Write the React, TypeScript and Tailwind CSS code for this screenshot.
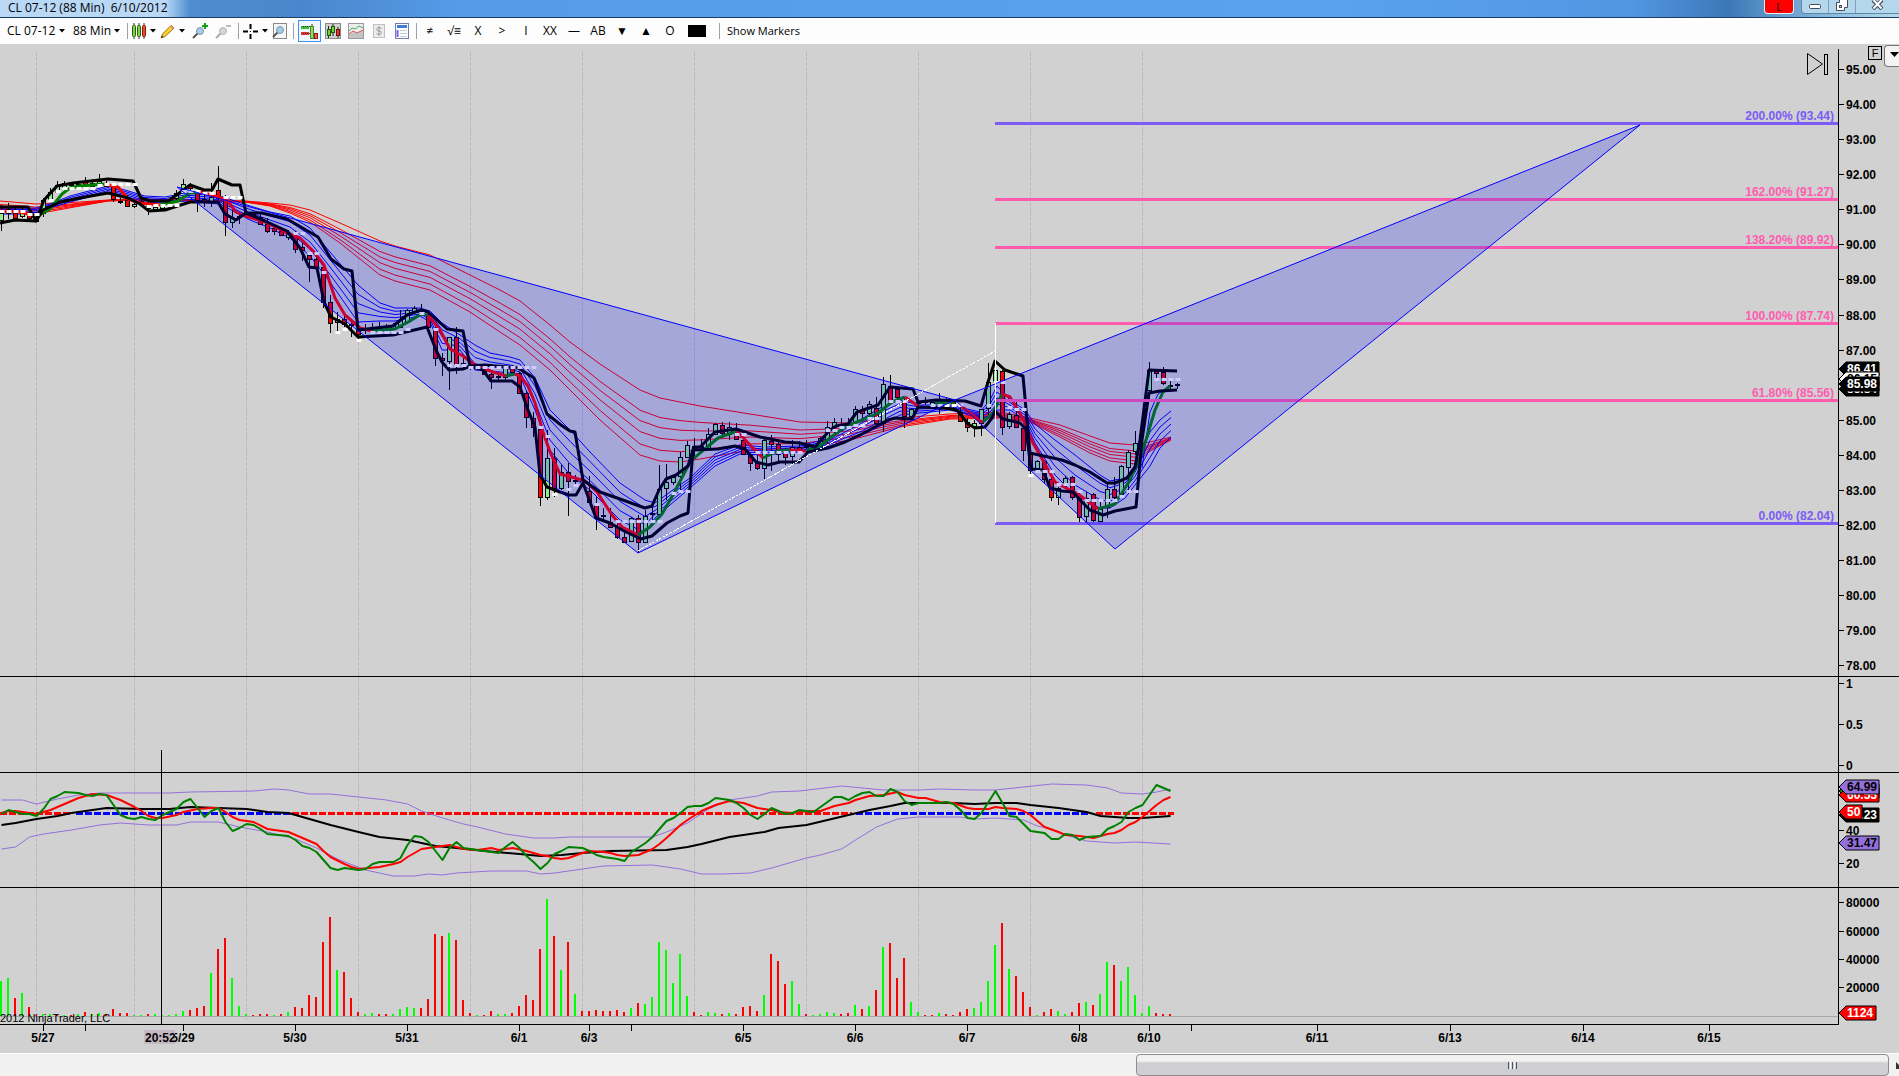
import type { ReactNode } from 'react';

type Point = [number, number];
type Candle = [number, number, number, number, number, 'g' | 'r' | 'd'];

const barX = (i: number) => 1.5 + 7 * i;
const toPoints = (pts: Point[]) => pts.map((p) => p.join(',')).join(' ');
const byBar = (pts: Point[]) => pts.map(([i, y]) => `${barX(i)},${y}`).join(' ');

const gridX = [36, 134, 246, 358, 470, 582, 694, 806, 918, 1030, 1142];

// bar index, high, low, body top, body bottom, kind
const candles: Candle[] = [
  [0, 205, 231, 213, 220, 'g'], [1, 203, 219, 209, 213, 'r'], [2, 208, 218, 213, 218, 'r'], [3, 207, 218, 212, 216, 'g'],
  [4, 207, 220, 215, 218, 'r'], [5, 212, 222, 215, 221, 'r'], [6, 198, 217, 200, 213, 'g'], [7, 188, 200, 192, 199, 'g'],
  [8, 181, 193, 185, 192, 'g'], [9, 181, 190, 183, 187, 'g'], [10, 182, 188, 184, 187, 'd'], [11, 181, 188, 184, 187, 'g'],
  [12, 177, 187, 182, 185, 'r'], [13, 181, 187, 183, 186, 'g'], [14, 174, 185, 181, 184, 'g'], [15, 181, 187, 183, 186, 'g'],
  [16, 183, 202, 186, 199, 'r'], [17, 198, 204, 201, 202, 'd'], [18, 195, 207, 200, 206, 'r'], [19, 201, 208, 204, 206, 'g'],
  [20, 198, 205, 201, 202, 'd'], [21, 201, 215, 204, 208, 'r'], [22, 204, 212, 207, 209, 'g'], [23, 203, 210, 205, 208, 'g'],
  [24, 200, 206, 202, 204, 'g'], [25, 190, 200, 193, 198, 'g'], [26, 179, 192, 184, 189, 'g'], [27, 183, 190, 185, 188, 'r'],
  [28, 190, 212, 193, 200, 'r'], [29, 195, 207, 199, 202, 'r'], [30, 183, 207, 197, 202, 'g'], [31, 166, 200, 190, 198, 'r'],
  [32, 195, 236, 200, 222, 'r'], [33, 208, 228, 218, 222, 'g'], [34, 213, 224, 216, 218, 'd'], [35, 210, 217, 213, 215, 'r'],
  [36, 212, 219, 214, 216, 'd'], [37, 213, 225, 217, 224, 'r'], [38, 218, 233, 224, 231, 'r'], [39, 226, 235, 228, 231, 'r'],
  [40, 228, 236, 231, 235, 'r'], [41, 230, 240, 234, 237, 'g'], [42, 231, 253, 236, 249, 'r'], [43, 243, 261, 247, 250, 'r'],
  [44, 252, 282, 255, 259, 'r'], [45, 255, 268, 259, 267, 'r'], [46, 263, 308, 267, 302, 'r'], [47, 295, 333, 302, 323, 'r'],
  [48, 312, 332, 319, 322, 'g'], [49, 315, 327, 319, 324, 'r'], [50, 320, 337, 324, 327, 'd'], [51, 325, 340, 329, 334, 'r'],
  [52, 324, 334, 328, 331, 'd'], [53, 323, 332, 327, 329, 'g'], [54, 322, 332, 327, 329, 'g'], [55, 324, 330, 326, 328, 'd'],
  [56, 323, 330, 325, 328, 'g'], [57, 310, 327, 320, 327, 'g'], [58, 309, 324, 310, 322, 'g'], [59, 306, 313, 308, 312, 'g'],
  [60, 304, 313, 309, 311, 'r'], [61, 310, 329, 316, 327, 'r'], [62, 327, 366, 330, 358, 'r'], [63, 353, 376, 358, 360, 'r'],
  [64, 337, 390, 337, 361, 'g'], [65, 327, 374, 337, 364, 'r'], [66, 357, 368, 363, 366, 'd'], [67, 362, 370, 365, 367, 'r'],
  [68, 364, 369, 366, 367, 'd'], [69, 365, 374, 369, 374, 'r'], [70, 373, 389, 374, 377, 'r'], [71, 372, 380, 376, 377, 'd'],
  [72, 368, 380, 368, 377, 'g'], [73, 365, 375, 368, 372, 'r'], [74, 372, 394, 373, 393, 'r'], [75, 391, 428, 393, 417, 'r'],
  [76, 412, 437, 418, 427, 'r'], [77, 423, 506, 429, 497, 'r'], [78, 430, 500, 458, 497, 'g'], [79, 448, 497, 458, 488, 'r'],
  [80, 465, 490, 472, 488, 'g'], [81, 463, 516, 472, 481, 'r'], [82, 475, 487, 480, 481, 'd'], [83, 475, 485, 479, 481, 'r'],
  [84, 476, 504, 491, 502, 'r'], [85, 497, 530, 505, 517, 'r'], [86, 508, 520, 515, 517, 'd'], [87, 508, 527, 522, 527, 'r'],
  [88, 519, 539, 527, 537, 'r'], [89, 532, 542, 537, 542, 'r'], [90, 517, 542, 518, 541, 'g'], [91, 515, 553, 518, 542, 'r'],
  [92, 510, 543, 516, 542, 'g'], [93, 502, 520, 513, 514, 'd'], [94, 465, 515, 489, 514, 'g'], [95, 464, 500, 482, 488, 'g'],
  [96, 475, 485, 477, 482, 'g'], [97, 452, 492, 457, 476, 'g'], [98, 441, 458, 445, 457, 'g'], [99, 438, 458, 446, 449, 'r'],
  [100, 439, 450, 446, 448, 'd'], [101, 428, 450, 434, 448, 'g'], [102, 423, 435, 424, 434, 'g'], [103, 422, 435, 425, 433, 'r'],
  [104, 422, 440, 427, 434, 'g'], [105, 423, 440, 432, 439, 'r'], [106, 439, 455, 440, 454, 'r'], [107, 453, 471, 455, 463, 'r'],
  [108, 455, 470, 463, 468, 'r'], [109, 438, 479, 440, 468, 'g'], [110, 435, 471, 441, 444, 'r'], [111, 440, 463, 444, 454, 'r'],
  [112, 448, 465, 452, 457, 'r'], [113, 440, 465, 447, 456, 'g'], [114, 441, 453, 447, 449, 'r'], [115, 440, 450, 446, 448, 'd'],
  [116, 444, 450, 446, 448, 'd'], [117, 437, 446, 438, 446, 'g'], [118, 421, 445, 427, 440, 'g'], [119, 418, 433, 422, 427, 'g'],
  [120, 418, 428, 424, 425, 'd'], [121, 418, 428, 424, 426, 'r'], [122, 406, 423, 409, 422, 'g'], [123, 406, 420, 410, 413, 'r'],
  [124, 401, 418, 404, 413, 'g'], [125, 397, 426, 408, 423, 'r'], [126, 377, 432, 384, 423, 'g'], [127, 375, 403, 386, 402, 'r'],
  [128, 387, 400, 389, 397, 'r'], [129, 397, 428, 400, 416, 'r'], [130, 408, 420, 409, 416, 'g'], [131, 400, 407, 402, 404, 'd'],
  [132, 397, 405, 401, 402, 'd'], [133, 399, 406, 402, 404, 'g'], [134, 393, 414, 400, 405, 'g'], [135, 397, 407, 401, 404, 'g'],
  [136, 400, 408, 402, 406, 'r'], [137, 407, 422, 412, 421, 'r'], [138, 418, 432, 422, 427, 'r'], [139, 420, 437, 423, 426, 'g'],
  [140, 409, 436, 409, 423, 'g'], [141, 363, 415, 382, 408, 'g'], [142, 362, 383, 370, 382, 'g'], [143, 370, 435, 371, 427, 'r'],
  [144, 412, 429, 414, 426, 'g'], [145, 402, 427, 415, 427, 'r'], [146, 427, 461, 428, 450, 'r'], [147, 451, 477, 454, 470, 'r'],
  [148, 460, 472, 461, 468, 'g'], [149, 460, 483, 461, 479, 'r'], [150, 478, 501, 479, 497, 'r'], [151, 487, 505, 488, 497, 'g'],
  [152, 476, 487, 478, 483, 'g'], [153, 476, 500, 477, 497, 'r'], [154, 490, 522, 497, 517, 'r'], [155, 492, 525, 498, 516, 'g'],
  [156, 493, 522, 494, 520, 'r'], [157, 502, 522, 509, 521, 'g'], [158, 483, 518, 489, 507, 'g'], [159, 477, 500, 489, 497, 'r'],
  [160, 465, 497, 466, 494, 'g'], [161, 450, 490, 452, 467, 'g'], [162, 431, 455, 443, 451, 'g'], [163, 440, 452, 446, 448, 'd'],
  [164, 362, 400, 370, 390, 'g'], [165, 369, 378, 371, 373, 'r'], [166, 367, 385, 372, 383, 'r'], [167, 381, 390, 385, 386, 'd'],
  [168, 383, 389, 384, 385, 'd'],
];

// x, first average, last average; the ones between are spread over the gap
const slowFan: [number, number, number][] = [
  [0, 201, 212], [36, 204, 214], [80, 202, 206], [108, 200, 201], [140, 199, 200], [200, 200, 201], [245, 201, 202], [270, 203, 206],
  [290, 205, 213], [310, 210, 222], [340, 223, 243], [380, 241, 275], [395, 246, 281], [430, 255, 290], [450, 265, 301],
  [470, 275, 312], [500, 290, 332], [520, 301, 345], [550, 325, 370], [570, 342, 390], [600, 364, 420], [640, 390, 455],
  [660, 398, 461], [680, 402, 462], [700, 406, 459], [750, 414, 450], [800, 422, 448], [850, 423, 440], [900, 418, 427],
  [950, 414, 419], [1000, 412, 418], [1030, 418, 422], [1060, 425, 437], [1090, 436, 453], [1110, 443, 461], [1135, 445, 464],
  [1150, 442, 451], [1171, 437, 440],
];
const fastFan: [number, number, number][] = [
  [0, 208, 214], [36, 208, 214], [50, 204, 208], [70, 196, 202], [108, 186, 192], [125, 190, 196], [145, 196, 202], [165, 197, 203],
  [185, 193, 201], [220, 196, 204], [250, 206, 220], [270, 212, 228], [290, 216, 238], [310, 228, 256], [330, 252, 282],
  [358, 285, 322], [380, 303, 321], [395, 308, 321], [420, 308, 316], [430, 311, 322], [442, 323, 350], [460, 335, 350],
  [475, 345, 370], [490, 353, 371], [510, 357, 373], [520, 360, 376], [535, 378, 410], [550, 410, 450], [570, 430, 475],
  [590, 452, 490], [620, 483, 520], [645, 500, 533], [655, 503, 518], [670, 492, 505], [690, 478, 488], [715, 454, 466],
  [740, 445, 454], [765, 447, 455], [800, 446, 452], [830, 438, 446], [860, 420, 436], [880, 408, 426], [900, 400, 415],
  [920, 405, 413], [950, 405, 410], [980, 412, 418], [990, 400, 416], [997, 386, 410], [1010, 400, 410], [1025, 410, 420],
  [1035, 424, 443], [1055, 440, 475], [1075, 455, 495], [1100, 475, 508], [1110, 481, 508], [1125, 478, 498], [1135, 468, 485],
  [1150, 432, 466], [1160, 420, 448], [1171, 411, 437],
];
const slowShares = [0, 0.31, 0.47, 0.64, 0.83, 1];
const fastShares = [0, 0.25, 0.5, 0.75, 1];

const channelTop: Point[] = [
  [0, 207], [28, 207], [36, 221], [44, 200], [57, 186], [73, 183], [108, 179], [133, 181], [141, 198], [150, 201], [168, 201], [178, 194],
  [190, 185], [204, 190], [212, 190], [218, 179], [232, 185], [240, 185], [246, 213], [262, 213], [287, 219], [306, 230], [318, 237],
  [331, 259], [344, 269], [352, 271], [358, 330], [393, 326], [407, 315], [421, 310], [428, 312], [447, 329], [463, 331], [470, 366],
  [485, 365], [518, 368], [534, 378], [547, 414], [561, 425], [570, 431], [575, 432], [583, 480], [600, 492], [620, 499], [645, 508],
  [652, 506], [659, 490], [666, 479], [676, 475], [688, 466], [694, 447], [700, 447], [715, 432], [736, 429], [760, 437], [785, 442],
  [800, 443], [815, 447], [829, 431], [836, 426], [848, 424], [857, 412], [878, 405], [890, 387], [913, 389], [918, 402], [937, 400],
  [965, 401], [981, 406], [988, 382], [995, 361], [1005, 370], [1023, 376], [1030, 453], [1062, 460], [1075, 465], [1090, 472],
  [1107, 483], [1115, 483], [1127, 478], [1135, 467], [1140, 440], [1149, 370], [1177, 371],
];
const channelBottom: Point[] = [
  [0, 223], [15, 220], [36, 221], [43, 210], [60, 202], [85, 197], [108, 193], [128, 198], [140, 204], [149, 211], [165, 210], [190, 202],
  [218, 202], [225, 214], [236, 220], [246, 213], [265, 221], [287, 231], [300, 248], [309, 267], [317, 268], [324, 302], [331, 317],
  [345, 324], [358, 337], [393, 335], [427, 327], [436, 350], [442, 362], [449, 370], [463, 369], [470, 366], [483, 370], [491, 381],
  [512, 381], [520, 387], [528, 410], [535, 427], [540, 475], [547, 487], [560, 492], [569, 495], [576, 495], [583, 483], [596, 518],
  [610, 523], [624, 531], [641, 539], [652, 536], [667, 523], [680, 516], [688, 513], [693, 450], [718, 449], [735, 446], [745, 449],
  [756, 462], [768, 465], [780, 462], [799, 462], [808, 452], [828, 448], [845, 442], [860, 435], [888, 420], [895, 418], [912, 419],
  [918, 407], [945, 408], [957, 410], [968, 424], [975, 428], [985, 427], [992, 418], [995, 411], [1003, 419], [1020, 423], [1026, 429],
  [1031, 469], [1043, 470], [1050, 488], [1062, 491], [1073, 492], [1080, 500], [1090, 510], [1103, 515], [1115, 511], [1136, 507],
  [1142, 440], [1149, 393], [1160, 391], [1177, 390],
];

const trend: { up: boolean; pts: Point[] }[] = [
  { up: false, pts: [[0, 211], [20, 212], [36, 216]] },
  { up: true, pts: [[36, 217], [50, 209], [62, 194], [70, 188], [80, 186], [104, 184]] },
  { up: false, pts: [[104, 184], [118, 187], [128, 199], [140, 203], [160, 205]] },
  { up: true, pts: [[160, 205], [178, 201], [190, 193], [200, 192]] },
  { up: false, pts: [[200, 192], [218, 197], [227, 200], [236, 212], [245, 216], [265, 222], [285, 232], [300, 238], [314, 252], [324, 265], [335, 298], [345, 315], [360, 328], [372, 331]] },
  { up: true, pts: [[372, 331], [395, 329], [410, 321], [421, 314], [428, 315]] },
  { up: false, pts: [[428, 315], [440, 330], [450, 349], [463, 356], [475, 365], [493, 372], [506, 376]] },
  { up: true, pts: [[506, 376], [515, 374]] },
  { up: false, pts: [[515, 374], [520, 376], [528, 386], [535, 403], [543, 432], [550, 452], [560, 474], [575, 478], [585, 481], [597, 492], [612, 515], [622, 527], [638, 535]] },
  { up: true, pts: [[638, 535], [650, 527], [662, 514], [673, 495], [690, 462], [700, 453], [718, 438], [737, 431]] },
  { up: false, pts: [[737, 431], [750, 445], [763, 458]] },
  { up: true, pts: [[763, 458], [778, 451], [790, 450]] },
  { up: false, pts: [[790, 450], [806, 451]] },
  { up: true, pts: [[806, 451], [820, 446], [830, 438], [845, 427], [862, 420], [878, 413], [892, 402], [905, 397]] },
  { up: false, pts: [[905, 397], [918, 406]] },
  { up: true, pts: [[935, 403], [955, 402]] },
  { up: false, pts: [[960, 405], [980, 421], [983, 422]] },
  { up: true, pts: [[983, 422], [993, 413], [1002, 394]] },
  { up: false, pts: [[1002, 394], [1010, 397], [1022, 417], [1033, 443], [1045, 464], [1055, 482], [1062, 486], [1078, 494], [1090, 503], [1098, 509]] },
  { up: true, pts: [[1098, 509], [1115, 504], [1130, 480], [1142, 453], [1155, 410], [1163, 392], [1170, 386]] },
];

// first bar, last bar, y
const whiteDashes: [number, number, number][] = [
  [0, 3, 211], [4, 5, 214], [7, 7, 200], [8, 8, 191], [9, 13, 188], [14, 14, 185], [15, 19, 184], [21, 21, 206], [22, 25, 205],
  [26, 28, 191], [29, 30, 193], [32, 34, 197], [42, 43, 233], [44, 45, 253], [46, 46, 272], [48, 48, 332], [49, 49, 329], [51, 51, 340],
  [53, 57, 332], [58, 58, 329], [60, 60, 313], [62, 62, 329], [64, 66, 365], [67, 73, 367], [74, 76, 367], [77, 77, 427], [78, 78, 436],
  [79, 79, 494], [81, 81, 489], [82, 82, 485], [85, 85, 504], [88, 94, 521], [96, 96, 493], [97, 98, 491], [105, 106, 434],
  [108, 114, 452], [118, 119, 430], [120, 121, 427], [122, 123, 425], [124, 125, 418], [127, 129, 401], [133, 137, 405],
  [141, 141, 405], [142, 143, 382], [144, 144, 407], [145, 146, 409], [147, 147, 475], [148, 150, 471], [151, 153, 484],
  [154, 154, 491], [155, 159, 500], [160, 160, 496], [161, 162, 491], [165, 168, 379],
];

const fibs = [
  { y: 123, label: '200.00% (93.44)', color: '#7b5cf5' },
  { y: 199, label: '162.00% (91.27)', color: '#ff5cb0' },
  { y: 247, label: '138.20% (89.92)', color: '#ff5cb0' },
  { y: 323, label: '100.00% (87.74)', color: '#ff5cb0' },
  { y: 400, label: '61.80% (85.56)', color: '#ff5cb0' },
  { y: 523, label: '0.00% (82.04)', color: '#7b5cf5' },
];

const rsi: Point[] = [
  [0, 814], [1, 810], [3, 814], [4, 814], [5, 816], [6, 809], [7, 799], [8, 796], [9, 792], [11, 793], [12, 795], [13, 796], [14, 794], [15, 795],
  [16, 805], [17, 815], [18, 818], [19, 819], [20, 817], [21, 819], [22, 820], [23, 815], [24, 812], [25, 809], [26, 802], [27, 799],
  [28, 808], [29, 817], [30, 811], [31, 808], [32, 822], [33, 831], [34, 828], [35, 824], [36, 825], [37, 829], [38, 834], [41, 836],
  [42, 840], [43, 846], [44, 848], [45, 852], [46, 860], [47, 868], [48, 870], [49, 868], [50, 869], [51, 870], [52, 869], [53, 864],
  [54, 862], [56, 862], [57, 858], [58, 845], [59, 836], [60, 837], [61, 842], [62, 851], [63, 860], [64, 848], [65, 842], [66, 848],
  [67, 849], [69, 851], [71, 853], [72, 847], [73, 842], [74, 848], [75, 856], [76, 862], [77, 869], [78, 863], [79, 854], [80, 851],
  [81, 847], [83, 848], [84, 851], [85, 855], [86, 857], [88, 859], [89, 861], [90, 852], [92, 843], [93, 837], [94, 829], [95, 821],
  [96, 818], [97, 813], [98, 807], [99, 806], [100, 806], [101, 803], [102, 798], [104, 800], [105, 803], [106, 808], [107, 815],
  [108, 819], [109, 814], [110, 808], [111, 811], [112, 814], [113, 813], [114, 810], [116, 812], [117, 807], [118, 802], [119, 797],
  [120, 797], [121, 800], [122, 796], [123, 793], [124, 792], [125, 796], [126, 796], [127, 789], [128, 792], [129, 801], [130, 805],
  [131, 803], [134, 803], [135, 802], [136, 804], [137, 810], [138, 818], [139, 819], [140, 813], [141, 802], [142, 791], [143, 803],
  [144, 816], [145, 817], [146, 824], [147, 831], [149, 833], [150, 839], [151, 839], [152, 834], [153, 835], [154, 840], [155, 837],
  [157, 836], [158, 829], [159, 826], [160, 822], [161, 812], [162, 808], [163, 805], [164, 795], [165, 785], [166, 788], [167, 791],
];
const rsiFast: Point[] = [
  [0, 813], [1, 811], [2, 811], [3, 812], [5, 814], [7, 810], [9, 804], [11, 798], [13, 794], [15, 795], [17, 800], [19, 807], [20, 811],
  [21, 816], [22, 818], [23, 818], [25, 815], [26, 812], [28, 809], [30, 808], [31, 808], [32, 812], [33, 817], [34, 820], [36, 822],
  [38, 829], [41, 832], [42, 835], [44, 841], [45, 844], [46, 851], [47, 857], [49, 864], [50, 867], [51, 869], [54, 867], [56, 864],
  [57, 862], [58, 857], [60, 849], [61, 848], [64, 845], [66, 849], [68, 850], [70, 848], [71, 850], [73, 848], [75, 851], [77, 855],
  [78, 856], [79, 858], [80, 859], [81, 858], [83, 853], [84, 851], [86, 852], [87, 853], [88, 855], [89, 856], [91, 855], [93, 849],
  [94, 844], [95, 838], [97, 825], [98, 820], [100, 811], [102, 805], [104, 801], [106, 803], [108, 808], [110, 810], [111, 812],
  [113, 813], [115, 811], [117, 811], [119, 806], [121, 803], [122, 800], [124, 796], [126, 795], [128, 792], [129, 795], [131, 798],
  [132, 798], [134, 802], [136, 803], [138, 808], [139, 809], [141, 809], [142, 807], [143, 808], [145, 809], [146, 811], [147, 815],
  [148, 821], [149, 827], [151, 832], [152, 835], [154, 836], [156, 838], [158, 834], [159, 833], [160, 830], [161, 825], [162, 822],
  [163, 817], [164, 811], [165, 805], [166, 800], [167, 797],
];
const rsiSlow: Point[] = [
  [0, 825], [2, 823], [5, 819], [8, 816], [10, 813], [13, 810], [15, 808], [20, 809], [24, 809], [27, 807], [31, 808], [35, 809], [38, 812],
  [41, 813], [44, 819], [47, 825], [51, 832], [54, 837], [58, 840], [62, 846], [65, 848], [69, 851], [74, 854], [77, 856], [80, 855],
  [83, 853], [87, 851], [95, 850], [98, 847], [100, 844], [104, 837], [109, 832], [111, 828], [115, 825], [118, 820], [121, 815],
  [124, 810], [127, 806], [129, 803], [136, 803], [139, 804], [142, 803], [145, 803], [147, 805], [151, 808], [155, 812], [157, 816],
  [161, 818], [163, 818], [167, 816],
];
const bandTop: Point[] = [
  [0, 800], [3, 800], [5, 804], [8, 799], [11, 795], [14, 793], [24, 793], [27, 792], [36, 791], [39, 789], [41, 790], [44, 794], [47, 794],
  [51, 797], [55, 800], [58, 804], [60, 811], [63, 818], [66, 824], [68, 827], [72, 834], [76, 838], [79, 838], [81, 837], [93, 837],
  [95, 832], [98, 823], [101, 809], [104, 800], [108, 796], [110, 792], [114, 791], [120, 786], [126, 790], [131, 790], [134, 789],
  [139, 790], [142, 790], [146, 787], [150, 784], [155, 785], [158, 788], [160, 793], [163, 794], [165, 792], [167, 789],
];
const bandBottom: Point[] = [
  [0, 849], [2, 847], [4, 837], [6, 834], [10, 830], [14, 825], [17, 823], [21, 825], [25, 825], [27, 822], [31, 822], [34, 827], [38, 832],
  [42, 839], [45, 848], [48, 859], [52, 870], [54, 873], [56, 876], [59, 876], [61, 874], [63, 875], [65, 873], [70, 871], [75, 871],
  [77, 874], [79, 873], [83, 869], [86, 866], [93, 865], [97, 869], [100, 874], [103, 874], [107, 873], [110, 868], [112, 864],
  [115, 858], [117, 855], [120, 849], [122, 840], [125, 827], [128, 819], [131, 817], [137, 817], [139, 819], [142, 818], [146, 820],
  [148, 826], [150, 829], [152, 835], [155, 841], [159, 843], [162, 842], [167, 844],
];
const midline = [
  { from: 0, to: 72, color: '#ff0000' },
  { from: 76, to: 292, color: '#0000ff' },
  { from: 292, to: 852, color: '#ff0000' },
  { from: 856, to: 1088, color: '#0000ff' },
  { from: 1096, to: 1174, color: '#ff0000' },
];

// one entry per bar, height in pixels, signed: positive is an up bar, negative a down bar
const volume = [
  35, 38, -18, 23, -9, -1, 2, 2, -1, 1, -1, 2, -4, 2, 3, -2, -7, -3, -3, 1, 1, -2, 2, 1, 1, 2, 5, -6, -8, -10, 43, -67, -78, 38, 10, 2, -1,
  -2, -2, 1, -2, 4, -9, -8, -21, -19, -74, -99, 46, -44, -18, -4, 2, 3, -2, -2, 2, 7, 9, 8, -8, -17, -82, -80, 83, -76, -16, -3, 1, -1, -5,
  2, 2, -3, -10, -21, -16, -67, 117, -80, 46, -74, 22, -5, -5, -6, -5, -5, -6, -4, 8, -13, 12, 19, 74, 66, 33, 62, 20, -4, -1, 4, 3, -2, 3,
  -2, -9, -10, -5, 21, -62, -55, -32, 35, 12, -2, 1, 2, 4, 3, -2, -3, 11, -7, 10, -26, 69, -73, -38, -58, 14, 4, -1, -1, 3, -2, -1, -4, -7,
  8, 14, 35, 71, -93, 47, -40, -24, -9, 1, -4, -7, 5, 2, -4, -13, 14, -11, 22, 54, -51, 35, 49, 21, 3, 10, -3, -2, -2,
];

const dates = [
  { x: 43, label: '5/27' }, { x: 85 }, { x: 183, label: '5/29' }, { x: 295, label: '5/30' }, { x: 407, label: '5/31' },
  { x: 519, label: '6/1' }, { x: 589, label: '6/3' }, { x: 631 }, { x: 743, label: '6/5' }, { x: 855, label: '6/6' },
  { x: 967, label: '6/7' }, { x: 1079, label: '6/8' }, { x: 1149, label: '6/10' }, { x: 1191 }, { x: 1317, label: '6/11' },
  { x: 1450, label: '6/13' }, { x: 1583, label: '6/14' }, { x: 1709, label: '6/15' },
];

const priceTicks = Array.from({ length: 18 }, (_, k) => ({ y: Math.round(69 + k * 35.08), label: `${95 - k}.00` })).filter(
  (t) => t.label !== '86.00'
);

function Fan({ rows, shares, color }: { rows: [number, number, number][]; shares: number[]; color: string }) {
  return (
    <g fill="none" stroke={color} strokeWidth="1">
      {shares.map((s) => (
        <polyline key={s} points={rows.map(([x, a, b]) => `${x},${a + (b - a) * s}`).join(' ')} />
      ))}
    </g>
  );
}

function Grid({ top, bottom }: { top: number; bottom: number }) {
  return (
    <g stroke="#c09cc4" strokeOpacity="0.6" strokeDasharray="4 1" shapeRendering="crispEdges">
      {gridX.map((x) => (
        <line key={x} x1={x + 0.5} x2={x + 0.5} y1={top} y2={bottom} />
      ))}
    </g>
  );
}

function Tag({ y, text, fill, color = '#fff', width = 41 }: { y: number; text?: string; fill: string; color?: string; width?: number }) {
  return (
    <g>
      <path d={`M1 ${y}L8 ${y - 7}H${width}V${y + 7}H8Z`} fill={fill} stroke="#000" />
      {text && <text x="9" y={y + 4} fill={color}>{text}</text>}
    </g>
  );
}

function Pane({ top, className, label, ticks, tags, axisTop = top, children }: {
  top: number;
  className: string;
  label: string;
  ticks: { y: number; label: string }[];
  tags?: ReactNode;
  axisTop?: number;
  children?: ReactNode;
}) {
  return (
    <section aria-label={label} className={`grid grid-cols-[1fr_61px] ${className}`}>
      <svg className="h-full w-full">
        <g transform={`translate(0 ${-top})`}>{children}</g>
      </svg>
      <svg className="h-full w-full text-[12px] font-bold">
        <g transform={`translate(0 ${-top})`}>
          <line x1="0.5" x2="0.5" y1={axisTop} y2="1025" stroke="#000" />
          {ticks.map((t) => (
            <g key={t.label}>
              <line x1="0" x2="6" y1={t.y + 0.5} y2={t.y + 0.5} stroke="#000" />
              <text x="8" y={t.y + 5}>{t.label}</text>
            </g>
          ))}
          {tags}
        </g>
      </svg>
    </section>
  );
}

function PricePane() {
  return (
    <Pane
      top={44}
      axisTop={49}
      className="h-[633px] border-b border-black"
      label="Price"
      ticks={priceTicks}
      tags={
        <>
          <Tag y={369} text="86.41" fill="#000" />
          <Tag y={379} text="86.15" fill="#fff" color="#000" />
          <Tag y={389} text="85.84" fill="#000" />
          <Tag y={384} text="85.98" fill="#000" />
        </>
      }
    >
      <Grid top={52} bottom={676} />
      <Fan rows={slowFan} shares={slowShares} color="#ff0000" />
      <Fan rows={fastFan} shares={fastShares} color="#0000ff" />
      <polyline points="1142,468 1150,412 1158,394 1170,386" fill="none" stroke="#0000ff" />
      <g shapeRendering="crispEdges">
        {candles.map(([i, high, low, open, close, kind]) => {
          const x = 1 + 7 * i;
          return (
            <g key={i}>
              <rect x={x} y={high} width="1" height={low - high} />
              {kind === 'd' ? (
                <rect x={x - 2} y={open} width="5" height="2" />
              ) : (
                <rect x={x - 1.5} y={open + 0.5} width="4" height={Math.max(close - open, 2)} fill={kind === 'g' ? '#90ee90' : '#ff0000'} stroke="#000" />
              )}
            </g>
          );
        })}
      </g>
      <g fill="none" strokeWidth="3" strokeLinejoin="round">
        {trend.map((t, k) => (
          <polyline key={k} points={toPoints(t.pts)} stroke={t.up ? '#008000' : '#ff0000'} />
        ))}
        <polyline points={toPoints(channelTop)} stroke="#000" />
        <polyline points={toPoints(channelBottom)} stroke="#000" />
      </g>
      <g stroke="#fff" strokeWidth="3" strokeDasharray="5 2">
        {whiteDashes.map(([a, b, y]) => (
          <line key={a} x1={barX(a) - 2} x2={barX(b) + 3} y1={y + 0.5} y2={y + 0.5} />
        ))}
      </g>
      {fibs.map((f) => (
        <g key={f.label}>
          <line x1="995" x2="100%" y1={f.y + 0.5} y2={f.y + 0.5} stroke={f.color} strokeWidth="3" />
          <text x="100%" dx="-4" y={f.y - 3} textAnchor="end" fill={f.color} className="text-[12px] font-bold">{f.label}</text>
        </g>
      ))}
      <g fill="#0000ff" fillOpacity="0.2" stroke="#0000ff">
        <path d="M177 187L955 400L638 553Z" />
        <path d="M955 400L1640 125L1115 549Z" />
      </g>
      <line x1="638" y1="551" x2="995" y2="351" stroke="#fff" strokeDasharray="3 1" shapeRendering="crispEdges" />
      <line x1="995.5" y1="323" x2="995.5" y2="523" stroke="#fff" />
    </Pane>
  );
}

function RsiPane() {
  return (
    <Pane
      top={773}
      className="h-[115px] border-b border-black"
      label="RSI"
      ticks={[{ y: 830, label: '40' }, { y: 863, label: '20' }]}
      tags={
        <>
          <Tag y={791} fill="#008000" />
          <Tag y={795} text="60.55" fill="#ff0000" />
          <Tag y={787} text="64.99" fill="#9370db" color="#000" />
          <Tag y={815} text="49.23" fill="#000" />
          <Tag y={812} text="50" fill="#ff0000" width={24} />
          <Tag y={843} text="31.47" fill="#9370db" color="#000" />
        </>
      }
    >
      <Grid top={773} bottom={887} />
      {midline.map((m) => (
        <line key={m.from} x1={m.from} x2={m.to} y1="813.5" y2="813.5" stroke={m.color} strokeWidth="3" strokeDasharray="7 2" />
      ))}
      <g fill="none" strokeLinejoin="round">
        <polyline points={byBar(bandTop)} stroke="#9370db" />
        <polyline points={byBar(bandBottom)} stroke="#9370db" />
        <polyline points={byBar(rsiSlow)} stroke="#000" strokeWidth="2" />
        <polyline points={byBar(rsiFast)} stroke="#ff0000" strokeWidth="2" />
        <polyline points={byBar(rsi)} stroke="#008000" strokeWidth="2" />
      </g>
      <line x1="161.5" x2="161.5" y1="773" y2="888" stroke="#000" />
    </Pane>
  );
}

function VolumePane() {
  return (
    <Pane
      top={888}
      className="h-[137px]"
      label="Volume"
      ticks={[
        { y: 902, label: '80000' },
        { y: 931, label: '60000' },
        { y: 959, label: '40000' },
        { y: 987, label: '20000' },
      ]}
      tags={<Tag y={1013} text="1124" fill="#ff0000" width={38} />}
    >
      <Grid top={888} bottom={1020} />
      <line x1="0" x2="100%" y1="1016.5" y2="1016.5" stroke="#a3aaa3" />
      <g shapeRendering="crispEdges">
        {volume.map((v, i) => (
          <rect key={i} x={7 * i} y={1016 - Math.abs(v)} width="2" height={Math.abs(v)} fill={v > 0 ? '#00ff00' : '#ff0000'} />
        ))}
      </g>
      <text x="0" y="1022" className="text-[11px]">2012 NinjaTrader, LLC</text>
      <line x1="161.5" x2="161.5" y1="888" y2="1024" stroke="#000" />
      <line x1="0" x2="100%" y1="1024.5" y2="1024.5" stroke="#000" />
    </Pane>
  );
}

function Caret() {
  return (
    <svg width="6" height="4" viewBox="0 0 6 4" className="pointer-events-none shrink-0">
      <path d="M0 0H6L3 3.5Z" />
    </svg>
  );
}

function Picker({ id, label, value, width }: { id: string; label: string; value: string; width: string }) {
  return (
    <div className={`flex shrink-0 items-center ${width}`}>
      <label htmlFor={id} className="sr-only">{label}</label>
      <select id={id} className="h-[22px] min-w-0 flex-1 appearance-none bg-transparent text-[12px] leading-[22px] outline-none">
        <option>{value}</option>
      </select>
      <Caret />
    </div>
  );
}

function IconButton({ label, className, children }: { label: string; className: string; children: ReactNode }) {
  return (
    <button aria-label={label} className={`flex h-[22px] shrink-0 items-center justify-center gap-1 ${className}`}>
      {children}
    </button>
  );
}

function Separator() {
  return <span className="h-4 w-px shrink-0 bg-gray-400" />;
}

function Lens({ muted }: { muted?: boolean }) {
  return (
    <g>
      <path d="M1 15L6 10" stroke={muted ? '#aaa' : '#555'} strokeWidth="2" />
      <circle cx="8" cy="8" r="3.5" fill={muted ? '#d4d4d4' : '#a5cdea'} stroke={muted ? '#b5b5b5' : '#7f95a8'} />
    </g>
  );
}

const glyphs = ['≠', '√≡', 'X', '>', 'I', 'XX', '—', 'AB', '▼', '▲', 'O'];

function Toolbar() {
  return (
    <div className="flex h-[26px] items-center bg-[#fdfdfd] pl-[7px]">
      <Picker id="instrument" label="Instrument" value="CL 07-12" width="w-[58px]" />
      <span className="w-2" />
      <Picker id="interval" label="Interval" value="88 Min" width="w-[47px]" />
      <span className="w-[7px]" />
      <Separator />
      <IconButton label="Chart style" className="ml-1 w-6">
        <svg width="14" height="16" viewBox="0 0 14 16" className="shrink-0">
          <path d="M2 0V16M7 0V16M12 0V16" stroke="#333" />
          <rect x="0.5" y="2.5" width="3" height="11" rx="1" fill="#7fd63c" stroke="#2f5d10" />
          <rect x="5.5" y="2.5" width="3" height="11" rx="1" fill="#7fd63c" stroke="#2f5d10" />
          <rect x="10.5" y="2.5" width="3" height="11" rx="1" fill="#f04a3a" stroke="#7c1a10" />
        </svg>
        <Caret />
      </IconButton>
      <IconButton label="Drawing tools" className="ml-1 w-6">
        <svg width="15" height="15" viewBox="0 0 15 15" className="shrink-0">
          <path d="M1 14L2.5 10L11 1.5L14 4L5 12.5Z" fill="#f8d42a" stroke="#a4701c" />
          <path d="M10 2.500L11.500 1L14 3.500L12.500 5Z" fill="#e58a7a" />
          <path d="M1 14L2 11.500L3.500 13Z" fill="#333" />
        </svg>
        <Caret />
      </IconButton>
      <IconButton label="Zoom in" className="ml-1 w-6">
        <svg width="17" height="16" viewBox="0 0 17 16">
          <Lens />
          <path d="M13 0V6M10 3H16" stroke="#11a011" strokeWidth="2" />
        </svg>
      </IconButton>
      <IconButton label="Zoom out" className="w-[23px]">
        <svg width="17" height="16" viewBox="0 0 17 16">
          <Lens muted />
          <path d="M11 3H16" stroke="#bbb" strokeWidth="2" />
        </svg>
      </IconButton>
      <span className="w-[3px]" />
      <Separator />
      <IconButton label="Cross hair" className="ml-1 w-6">
        <svg width="15" height="15" viewBox="0 0 15 15" className="shrink-0">
          <path d="M7.500 0V5M7.500 10V15M0 7.500H5M10 7.500H15" stroke="#000" strokeWidth="2" />
          <path d="M7 7H8V8H7Z" />
        </svg>
        <Caret />
      </IconButton>
      <IconButton label="Data box" className="w-6">
        <svg width="15" height="16" viewBox="0 0 15 16">
          <rect x="1.500" y="0.500" width="13" height="15" fill="#f7f7f7" stroke="#888" />
          <g transform="translate(0 -1)"><Lens /></g>
        </svg>
      </IconButton>
      <span className="w-0.5" />
      <Separator />
      <IconButton label="Chart trader" className="ml-1 w-[23px] border border-[#3a94f4] bg-[#eef5fc]">
        <svg width="17" height="17" viewBox="0 0 17 17">
          <path d="M0 3H8V6H0Z" fill="#2fc02f" />
          <path d="M0 9H8V12H0Z" fill="#e83030" />
          <path d="M2 3.500H10M2 10.500H10" stroke="#333" strokeDasharray="1 1" />
          <path d="M11 1V16" stroke="#333" />
          <rect x="9.500" y="3.500" width="3" height="12" fill="#8edc5a" stroke="#4d8a28" />
          <rect x="13.500" y="10.500" width="3" height="5" fill="#f06050" stroke="#8a2018" />
        </svg>
      </IconButton>
      <IconButton label="Indicators" className="w-[23px]">
        <svg width="16" height="16" viewBox="0 0 16 16">
          <rect x="0.500" y="0.500" width="15" height="15" fill="#cdd2cd" stroke="#888" />
          <path d="M3.500 3V15M8 1V13M13 4V15" stroke="#222" />
          <rect x="2.500" y="6.500" width="3" height="6" fill="#6fd23a" stroke="#245a0a" />
          <rect x="6.500" y="3.500" width="3" height="6" fill="#6fd23a" stroke="#245a0a" />
          <rect x="11.500" y="6.500" width="3" height="6" fill="#e83a30" stroke="#6a100a" />
        </svg>
      </IconButton>
      <IconButton label="Strategies" className="w-[23px]">
        <svg width="16" height="16" viewBox="0 0 16 16">
          <rect x="0.500" y="0.500" width="15" height="15" fill="#ececec" stroke="#999" />
          <path d="M1 11L5 9L9 10L15 7V15H1Z" fill="#c4c4c4" />
          <path d="M1 8L4 5L7 6L11 3L15 5" fill="none" stroke="#4cae6c" />
          <path d="M1 11L5 8L9 10L15 7" fill="none" stroke="#e05050" />
        </svg>
      </IconButton>
      <IconButton label="Account" className="w-[23px]">
        <svg width="12" height="14" viewBox="0 0 12 14">
          <rect x="0.500" y="0.500" width="11" height="13" fill="#ececec" stroke="#c0c0c0" />
          <path d="M8.500 4.500C7 3 3.500 3.500 3.500 5.500C3.500 7.500 8.500 6.500 8.500 8.500C8.500 10.500 5 11 3.500 9.500M6 2V12" fill="none" stroke="#999" />
        </svg>
      </IconButton>
      <IconButton label="Properties" className="w-[23px]">
        <svg width="14" height="16" viewBox="0 0 14 16">
          <rect x="0.500" y="0.500" width="13" height="15" fill="#fff" stroke="#6f7fa8" />
          <path d="M2 2H12V5H2Z" fill="#3f80dc" />
          <path d="M2.500 7V14" stroke="#7b5cf5" strokeWidth="2" />
          <path d="M5 7.500H12M5 10.500H12M5 13.500H12" stroke="#c3c9de" />
        </svg>
      </IconButton>
      <span className="w-[3px]" />
      <Separator />
      <span className="w-px" />
      {glyphs.map((g) => (
        <button key={g} className="w-6 shrink-0 text-center text-[12px]">{g}</button>
      ))}
      <IconButton label="Color" className="w-[30px]">
        <span className="h-3 w-[18px] bg-black" />
      </IconButton>
      <span className="w-[7px]" />
      <Separator />
      <button className="ml-[7px] whitespace-nowrap">Show Markers</button>
    </div>
  );
}

function TitleBar() {
  return (
    <header className="flex h-[18px] items-start justify-between border-b border-[#1c3c66] bg-[linear-gradient(90deg,#b9d8f6_0,#b9d8f6_165px,#4f8ccf_190px,#4a86cb_300px,#559be8_460px,#5aa2ee_70%,#5296e2_86%,#3c78b8_91%,#86b8dc_96%,#b4dcea_100%)]">
      <h1 className="pl-2 text-[12px] leading-4 whitespace-pre">CL 07-12 (88 Min)  6/10/2012</h1>
      <div className="flex gap-[7px]">
        <button className="h-[14px] w-[30px] rounded-b border border-t-0 border-cyan-100 bg-[#ff0000] leading-[11px]">L</button>
        <div className="flex h-[14px] rounded-bl border-b border-l border-[#5f86a8] bg-[#b5d7ec]">
          <button aria-label="Minimize" className="flex w-[27px] items-center justify-center border-r border-[#7fa0bc]">
            <svg width="12" height="5" viewBox="0 0 12 5"><rect x="0.500" y="0.500" width="11" height="4" rx="1" fill="#fff" stroke="#444c5c" /></svg>
          </button>
          <button aria-label="Restore" className="flex w-[27px] items-start justify-center border-r border-[#7fa0bc]">
            <svg width="12" height="11" viewBox="0 0 12 11">
              <path d="M3.500 0V2.500H0.500V10.500H8.500V7.500H11.500V0" fill="#fff" stroke="#444c5c" />
              <rect x="3.500" y="5.500" width="2" height="2" fill="#b5d7ec" stroke="#444c5c" />
            </svg>
          </button>
          <button aria-label="Close" className="flex w-[43px] items-start justify-center">
            <svg width="13" height="10" viewBox="0 0 13 10">
              <path d="M2 0L11 9M11 0L2 9" stroke="#444c5c" strokeWidth="4" />
              <path d="M2.500 0L10.500 8.500M10.500 0L2.500 8.500" stroke="#fff" strokeWidth="2" />
            </svg>
          </button>
        </div>
      </div>
    </header>
  );
}

function TimeAxis() {
  return (
    <svg className="h-7 w-full text-[12px] font-bold">
      {dates.map((d) => (
        <g key={d.x}>
          <line x1={d.x + 0.5} x2={d.x + 0.5} y1="0" y2="6" stroke="#000" />
          {d.label && <text x={d.x} y="17" textAnchor="middle">{d.label}</text>}
        </g>
      ))}
      <rect x="144" y="5" width="31" height="14" fill="#c4b8c4" />
      <text x="145" y="17">20:52</text>
    </svg>
  );
}

function ScrollBar() {
  return (
    <div className="flex h-[23px] border-t border-white bg-[#f1f1f1]">
      <div className="flex-[1137]" />
      <button
        aria-label="Scroll chart"
        className="flex flex-[752] items-center justify-center gap-px rounded-sm border border-[#8d8d8d] bg-linear-to-b from-[#f2f2f2] from-30% to-[#cfcfd3] to-40%"
      >
        <span className="h-[7px] w-px bg-gray-600" />
        <span className="h-[7px] w-px bg-white" />
        <span className="h-[7px] w-px bg-gray-600" />
        <span className="h-[7px] w-px bg-white" />
        <span className="h-[7px] w-px bg-gray-600" />
      </button>
      <button aria-label="Scroll right" className="flex w-[10px] items-center justify-end">
        <svg width="3" height="7" viewBox="0 0 3 7"><path d="M0 0L3 3V7H0Z" fill="#333" /></svg>
      </button>
    </div>
  );
}

export default function App() {
  return (
    <div className="flex min-h-screen flex-col overflow-hidden bg-[#d0d1d0] font-['Open_Sans',sans-serif] text-[11px] text-black">
      <TitleBar />
      <Toolbar />
      <main className="relative font-['Liberation_Sans',Arial,sans-serif]">
        <PricePane />
        <Pane
          top={677}
          className="h-24 border-b border-black"
          label="Signal"
          ticks={[{ y: 683, label: '1' }, { y: 724, label: '0.5' }, { y: 765, label: '0' }]}
        >
          <Grid top={677} bottom={772} />
          <line x1="161.5" x2="161.5" y1="750" y2="773" stroke="#000" />
        </Pane>
        <RsiPane />
        <VolumePane />
        <TimeAxis />
        <div className="absolute top-px right-0 flex items-start">
          <button aria-label="Go to last bar" className="mt-2 mr-[39px]">
            <svg width="22" height="22" viewBox="0 0 22 22" fill="none" stroke="#000">
              <path d="M0.500 0.500L15.500 11L0.500 21.500Z" />
              <rect x="17.500" y="1.500" width="3" height="20" />
            </svg>
          </button>
          <button className="mt-px mr-[2px] h-[14px] w-[14px] border border-black text-[11px] leading-3">F</button>
          <button aria-label="Chart menu" className="flex h-[22px] w-[15px] items-center justify-end rounded-l border border-r-0 border-[#777] bg-[#f4f4f4] pb-1">
            <svg width="9" height="5" viewBox="0 0 9 5"><path d="M0 0H9L4.500 5Z" /></svg>
          </button>
        </div>
      </main>
      <ScrollBar />
    </div>
  );
}
